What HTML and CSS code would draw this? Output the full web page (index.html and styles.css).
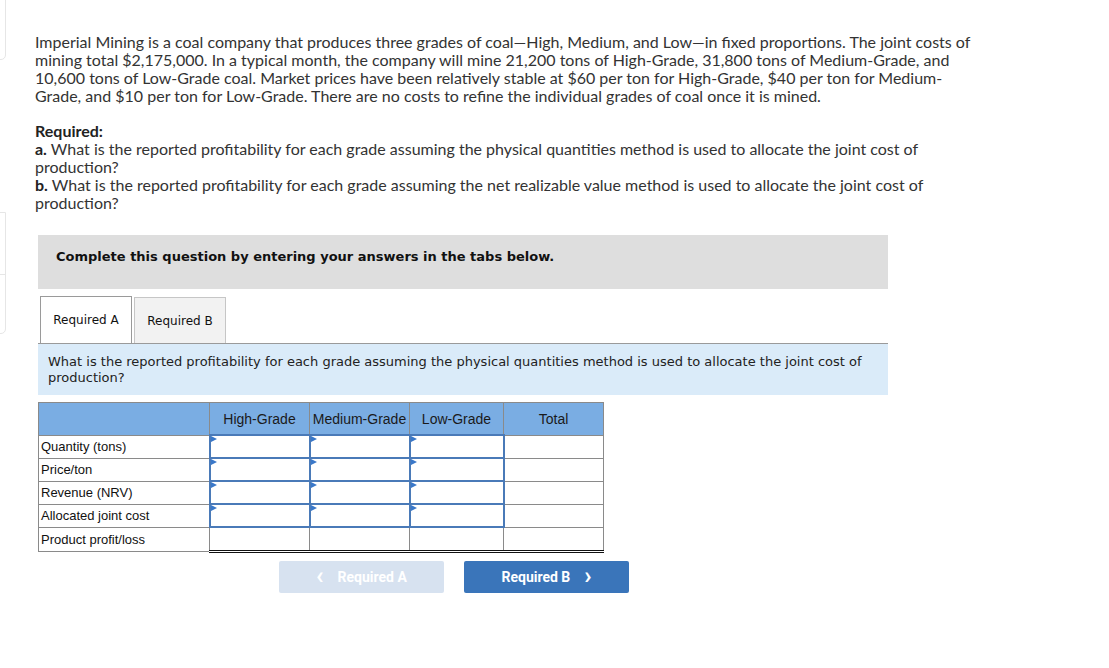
FILE: index.html
```html
<!DOCTYPE html>
<html>
<head>
<meta charset="utf-8">
<link rel="stylesheet" href="styles.css">
</head>
<body>
<div class="side">
  <div class="side-card top"></div>
  <div class="side-card mid"><div class="side-div"></div></div>
</div>
<div class="page">
  <p class="intro">Imperial Mining is a coal company that produces three grades of coal—High, Medium, and Low—in fixed proportions. The joint costs of mining total $2,175,000. In a typical month, the company will mine 21,200 tons of High-Grade, 31,800 tons of Medium-Grade, and 10,600 tons of Low-Grade coal. Market prices have been relatively stable at $60 per ton for High-Grade, $40 per ton for Medium-Grade, and $10 per ton for Low-Grade. There are no costs to refine the individual grades of coal once it is mined.</p>
  <div class="req">
    <div class="req-title">Required:</div>
    <div class="req-item"><b>a.</b> What is the reported profitability for each grade assuming the physical quantities method is used to allocate the joint cost of production?</div>
    <div class="req-item"><b>b.</b> What is the reported profitability for each grade assuming the net realizable value method is used to allocate the joint cost of production?</div>
  </div>

  <div class="widget">
    <div class="banner">Complete this question by entering your answers in the tabs below.</div>
    <div class="tabs">
      <div class="tab active">Required A</div>
      <div class="tab">Required B</div>
    </div>
    <div class="prompt">What is the reported profitability for each grade assuming the physical quantities method is used to allocate the joint cost of production?</div>

    <table class="grid">
      <thead>
        <tr><th class="lbl"></th><th class="c1">High-Grade</th><th class="c2">Medium-Grade</th><th class="c3">Low-Grade</th><th class="c4">Total</th></tr>
      </thead>
      <tbody>
        <tr><td class="lbl">Quantity (tons)</td><td class="in"><span class="tri"></span></td><td class="in"><span class="tri"></span></td><td class="in"><span class="tri"></span></td><td></td></tr>
        <tr><td class="lbl">Price/ton</td><td class="in"><span class="tri"></span></td><td class="in"><span class="tri"></span></td><td class="in"><span class="tri"></span></td><td></td></tr>
        <tr><td class="lbl">Revenue (NRV)</td><td class="in"><span class="tri"></span></td><td class="in"><span class="tri"></span></td><td class="in"><span class="tri"></span></td><td></td></tr>
        <tr><td class="lbl">Allocated joint cost</td><td class="in"><span class="tri"></span></td><td class="in"><span class="tri"></span></td><td class="in"><span class="tri"></span></td><td></td></tr>
        <tr class="last"><td class="lbl">Product profit/loss</td><td></td><td></td><td></td><td></td></tr>
      </tbody>
    </table>

    <div class="nav">
      <button class="btn prev"><span class="chev">&lsaquo;</span>Required A</button>
      <button class="btn next">Required B<span class="chev">&rsaquo;</span></button>
    </div>
  </div>
</div>
</body>
</html>
```
FILE: styles.css
```css
html, body { margin: 0; padding: 0; background: #fff; }
body { position: relative; width: 1109px; height: 668px; overflow: hidden; }

.side { position: absolute; left: 0; top: 0; width: 7px; height: 668px; }
.side-card { position: absolute; left: -10px; width: 16px; border: 1px solid #e6e6e6; border-radius: 0 0 5px 0; background: #fff; box-sizing: border-box; }
.side-card.top { top: -10px; height: 70px; }
.side-card.mid { top: 212px; height: 122px; border-radius: 0 0 5px 0; }
.side-div { position: absolute; left: 0; right: 0; top: 61px; border-top: 1px solid #e6e6e6; }

.page { padding: 33px 0 0 35px; width: 942px; font-family: "Lato", "Open Sans", sans-serif; color: #333; }
.intro { margin: 0; font-size: 16px; line-height: 18px; }
.req { margin: 17px 0 0 0; font-size: 16px; line-height: 18px; }
.req-title { font-weight: 700; color: #222; }
.req-item b { font-weight: 700; color: #222; }

.widget { margin: 23px 0 0 3px; width: 850px; }
.banner { background: #dedede; height: 54px; box-sizing: border-box; padding: 14px 0 0 18px; font-family: "DejaVu Sans", Verdana, sans-serif; font-size: 13px; font-weight: bold; color: #111; line-height: 16px; }

.tabs { display: flex; gap: 2px; margin: 7px 0 0 2px; height: 47px; align-items: flex-end; }
.tab { box-sizing: border-box; width: 92px; height: 46px; border: 1px solid #c6c6c6; border-bottom: none; background: #f2f2f2; font-family: "DejaVu Sans", Verdana, sans-serif; font-size: 12px; color: #111; display: flex; align-items: center; justify-content: center; }
.tab.active { height: 47px; background: #fff; border: 1px solid #9a9a9a; border-bottom: none; }

.prompt { background: #daebf9; border-top: 1px solid #9a9a9a; padding: 10px 10px 9px 10px; font-family: "DejaVu Sans", Verdana, sans-serif; font-size: 13px; line-height: 16px; color: #222; }

.grid { margin-top: 7px; border-collapse: collapse; font-family: "Liberation Sans", Arial, sans-serif; color: #111; table-layout: fixed; }
.grid th { background: #7aade3; height: 31px; border: 1px solid #8a8a8a; font-size: 14px; font-weight: normal; color: #1a1a1a; padding: 0; }
.grid th.lbl { width: 170px; }
.grid th.c1 { width: 99px; }
.grid th.c2 { width: 99px; }
.grid th.c3 { width: 93px; }
.grid th.c4 { width: 99px; }
.grid td { height: 22px; border: 1px solid #8a8a8a; padding: 0; font-size: 13px; position: relative; }
.grid td.lbl { padding-left: 2px; }
.grid td.in { border: 2px solid #4a7ab8; height: 20px; }
.tri { position: absolute; left: 0; top: 0; width: 0; height: 0; border-top: 3px solid transparent; border-bottom: 3px solid transparent; border-left: 6px solid #3a78c9; }
.grid tr.last td { border-bottom: 3px double #111; }
.grid tr.last td.lbl { border-bottom: 1px solid #8a8a8a; }

.nav { display: flex; gap: 20px; margin: 8px 0 0 241px; }
.btn { width: 165px; height: 32px; border: none; border-radius: 2px; font-family: "Roboto", sans-serif; font-weight: bold; font-size: 14px; color: #fff; display: flex; align-items: center; justify-content: center; padding: 0; }
.btn.prev { background: #d7e2f0; }
.btn.next { background: #3a75ba; }
.chev { font-size: 24px; line-height: 20px; margin-top: -3px; }
.prev .chev { margin-right: 14px; }
.next .chev { margin-left: 14px; }
```
